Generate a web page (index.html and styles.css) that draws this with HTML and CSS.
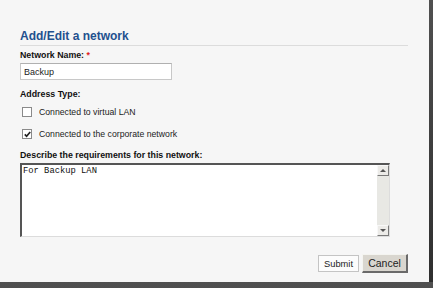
FILE: index.html
```html
<!DOCTYPE html>
<html lang="en">
  <head>
    <meta charset="utf-8" />
    <title>Add/Edit a network</title>
    <link rel="stylesheet" href="styles.css">
  </head>
  <body>
    <div class="frame">
      <h2 class="title">Add/Edit a network</h2>

      <label class="label" for="net-name">Network Name: <span class="req">*</span></label>
      <input id="net-name" class="text-input" type="text" value="Backup" />

      <div class="label label-gap">Address Type:</div>
      <div class="check-row">
        <span class="check"></span>
        <span>Connected to virtual LAN</span>
      </div>
      <div class="check-row">
        <span class="check">
          <svg width="7" height="7" viewBox="0 0 7 7"><path d="M0.8 3.4 L2.6 5.3 L6.2 1" fill="none" stroke="#222" stroke-width="1.7"/></svg>
        </span>
        <span>Connected to the corporate network</span>
      </div>

      <div class="label label-gap2">Describe the requirements for this network:</div>
      <div class="memo">
        <textarea class="memo-text">For Backup LAN</textarea>
        <div class="scrollbar">
          <div class="sb-btn"><span class="arrow-up"></span></div>
          <div class="sb-track"></div>
          <div class="sb-btn"><span class="arrow-down"></span></div>
        </div>
      </div>

      <div class="actions">
        <button class="btn btn-submit">Submit</button>
        <button class="btn btn-cancel">Cancel</button>
      </div>
    </div>
  </body>
</html>
```

FILE: styles.css
```css
* {
  box-sizing: border-box;
}

html {
  background: linear-gradient(#505050, #2e2e2e);
}

body {
  margin: 0;
  font-family: 'Liberation Sans', Arial, sans-serif;
  color: #111;
}

.frame {
  width: 429px;
  height: 282px;
  background-color: #f6f6f6;
  padding: 29px 21px 0 20px;
}

.title {
  margin: 0;
  font-size: 12px;
  line-height: 15px;
  font-weight: bold;
  color: #23508e;
  padding-bottom: 1px;
  border-bottom: 1px solid #dcdcdc;
}

.label {
  display: block;
  font-size: 8.8px;
  font-weight: bold;
  line-height: 12px;
  margin-top: 3px;
}

.req {
  color: #e02020;
}

.label-gap {
  margin-top: 8px;
}

.label-gap2 {
  margin-top: 7px;
}

.text-input {
  display: block;
  width: 152px;
  height: 17px;
  margin: 2px 0 0 0;
  padding: 0 3px;
  font-family: 'Liberation Sans', Arial, sans-serif;
  font-size: 9px;
  color: #222;
  background: #fff;
  border: 1px solid #c8c8c8;
  border-top-color: #b0b0b0;
  outline: none;
}

.check-row {
  display: flex;
  align-items: center;
  gap: 7px;
  height: 16px;
  margin-top: 4px;
  padding-left: 2px;
  font-size: 8.7px;
  color: #222;
}

.check-row + .check-row {
  margin-top: 6px;
}

.check {
  width: 10px;
  height: 10px;
  border: 1px solid #8a8a8a;
  background: #fff;
  display: flex;
  align-items: center;
  justify-content: center;
}

.check svg {
  display: block;
}

.memo {
  display: flex;
  width: 370px;
  height: 74px;
  margin-top: 2px;
  border: 1px solid #dcdcdc;
  border-left: 2px solid #555;
  border-top: 2px solid #555;
  background: #fff;
}

.memo-text {
  flex: 1;
  border: none;
  outline: none;
  resize: none;
  overflow: hidden;
  padding: 1px 0 0 1px;
  font-family: 'Liberation Mono', 'Courier New', monospace;
  font-size: 8.8px;
  line-height: 11px;
  color: #111;
  background: #fff;
}

.scrollbar {
  width: 12px;
  display: flex;
  flex-direction: column;
  background: #e8e8e4;
}

.sb-btn {
  height: 11px;
  background: #ecebe8;
  border: 1px solid #f8f8f8;
  border-right-color: #7a7a7a;
  border-bottom-color: #7a7a7a;
  display: flex;
  align-items: center;
  justify-content: center;
}

.sb-track {
  flex: 1;
}

.arrow-up {
  width: 0;
  height: 0;
  border-left: 3px solid transparent;
  border-right: 3px solid transparent;
  border-bottom: 3px solid #555;
}

.arrow-down {
  width: 0;
  height: 0;
  border-left: 3px solid transparent;
  border-right: 3px solid transparent;
  border-top: 3px solid #555;
}

.actions {
  display: flex;
  justify-content: flex-end;
  align-items: center;
  gap: 3px;
  margin-top: 17px;
}

.btn {
  font-family: 'Liberation Sans', Arial, sans-serif;
  padding: 0;
  cursor: pointer;
}

.btn-submit {
  width: 41px;
  height: 17px;
  font-size: 9.3px;
  color: #222;
  background: #fcfcfc;
  border: 1px solid #c4c4c4;
}

.btn-cancel {
  width: 46px;
  height: 19px;
  font-size: 10.5px;
  color: #222;
  background: #d9d6cf;
  border: 1px solid #f4f4f0;
  border-right: 2px solid #6a6a6a;
  border-bottom: 2px solid #6a6a6a;
}
```
